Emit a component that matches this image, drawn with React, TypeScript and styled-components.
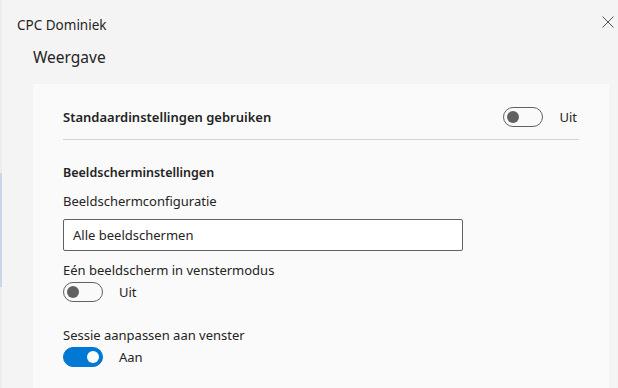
import React from "react";
import styled, { createGlobalStyle } from "styled-components";

const Global = createGlobalStyle`
  html, body { margin: 0; padding: 0; }
  body {
    width: 618px; height: 388px; overflow: hidden;
    background: #f4f4f4;
    font-family: "Segoe UI", "Noto Sans", "Open Sans", sans-serif;
    color: #242424;
  }
`;

const Page = styled.div`
  display: flex;
  width: 618px;
  height: 388px;
`;

const EdgeStrip = styled.div`
  width: 2px;
  flex: none;
  background: linear-gradient(
    to bottom,
    #ececec 0,
    #ececec 173px,
    #c9d6e6 173px,
    #c9d6e6 287px,
    #ececec 287px
  );
`;

const Main = styled.div`
  flex: 1;
  display: flex;
  flex-direction: column;
  padding: 0 9px 0 15px;
`;

const Header = styled.div`
  display: flex;
  align-items: center;
  justify-content: space-between;
  height: 34px;
  padding-top: 12px;
  box-sizing: border-box;
`;

const Title = styled.div`
  font-size: 13.5px;
  color: #242424;
  line-height: 18px;
  margin-top: 4px;
`;

const CloseButton = styled.button`
  align-self: flex-start;
  border: none;
  background: none;
  padding: 0;
  width: 14px;
  height: 14px;
  display: flex;
  align-items: center;
  justify-content: center;
  margin-right: -6px;
  margin-top: 3px;
`;

const Heading = styled.div`
  font-size: 15.5px;
  line-height: 22px;
  padding: 12px 0 0 16px;
  height: 50px;
  box-sizing: border-box;
  color: #242424;
`;

const Card = styled.div`
  margin-left: 16px;
  flex: 1;
  background: #fafafa;
  padding: 0 30px;
`;

const TopRow = styled.div`
  display: flex;
  align-items: center;
  justify-content: space-between;
  height: 56px;
  padding: 10px 2px 0 0;
  box-sizing: border-box;
  border-bottom: 1px solid #d4d4d4;
`;

const StrongLabel = styled.div`
  font-size: 13px;
  font-weight: 600;
  color: #242424;
`;

const ToggleGroup = styled.div`
  display: flex;
  align-items: center;
  gap: 16px;
  height: 20px;
`;

const Track = styled.div<{ $on?: boolean }>`
  width: 40px;
  height: 20px;
  box-sizing: border-box;
  border-radius: 10px;
  border: 1px solid ${(p) => (p.$on ? "#0078d4" : "#616161")};
  background: ${(p) => (p.$on ? "#0078d4" : "transparent")};
  display: flex;
  align-items: center;
  justify-content: ${(p) => (p.$on ? "flex-end" : "flex-start")};
  padding: 0 3px;
`;

const Knob = styled.div<{ $on?: boolean }>`
  width: 12px;
  height: 12px;
  border-radius: 50%;
  background: ${(p) => (p.$on ? "#ffffff" : "#616161")};
`;

const StateText = styled.span`
  font-size: 13px;
  color: #242424;
`;

const Section = styled.div`
  display: flex;
  flex-direction: column;
`;

const SectionTitle = styled.div`
  font-size: 12.5px;
  font-weight: 600;
  margin-top: 24px;
  line-height: 18px;
`;

const FieldLabel = styled.div<{ $mt: number }>`
  font-size: 13px;
  line-height: 20px;
  margin-top: ${(p) => p.$mt}px;
`;

const Input = styled.div`
  width: 400px;
  height: 32px;
  box-sizing: border-box;
  border: 1px solid #616161;
  border-radius: 2px;
  background: #ffffff;
  display: flex;
  align-items: center;
  padding: 0 9px;
  font-size: 13px;
  margin-top: 8px;
`;

const ToggleRow = styled.div`
  margin-top: 2px;
`;

function Toggle({ on, label }: { on?: boolean; label: string }) {
  return (
    <ToggleGroup>
      <Track $on={on}>
        <Knob $on={on} />
      </Track>
      <StateText>{label}</StateText>
    </ToggleGroup>
  );
}

export default function App() {
  return (
    <Page>
      <Global />
      <EdgeStrip />
      <Main>
        <Header>
          <Title>CPC Dominiek</Title>
          <CloseButton aria-label="Sluiten">
            <svg width="12" height="12" viewBox="0 0 12 12">
              <path d="M0.5 0.5 L11.5 11.5 M11.5 0.5 L0.5 11.5" stroke="#555" strokeWidth="1" fill="none" />
            </svg>
          </CloseButton>
        </Header>
        <Heading>Weergave</Heading>
        <Card>
          <TopRow>
            <StrongLabel>Standaardinstellingen gebruiken</StrongLabel>
            <Toggle label="Uit" />
          </TopRow>
          <Section>
            <SectionTitle>Beeldscherminstellingen</SectionTitle>
            <FieldLabel $mt={9}>Beeldschermconfiguratie</FieldLabel>
            <Input>Alle beeldschermen</Input>
            <FieldLabel $mt={9}>Eén beeldscherm in venstermodus</FieldLabel>
            <ToggleRow>
              <Toggle label="Uit" />
            </ToggleRow>
            <FieldLabel $mt={23}>Sessie aanpassen aan venster</FieldLabel>
            <ToggleRow>
              <Toggle on label="Aan" />
            </ToggleRow>
          </Section>
        </Card>
      </Main>
    </Page>
  );
}
